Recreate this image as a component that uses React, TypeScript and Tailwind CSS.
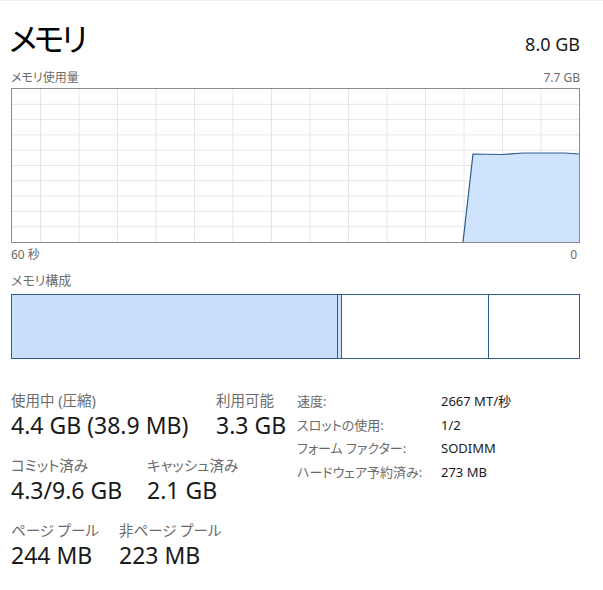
const font = { fontFamily: '"Noto Sans", "Noto Sans CJK JP", sans-serif' };

const chartW = 567;
const chartH = 153;

function UsageChart() {
  const vLines: number[] = [];
  for (let x = 28.5; x < chartW; x += 38.5) vLines.push(x);
  const hLines: number[] = [];
  for (let i = 1; i < 10; i++) hLines.push((chartH / 10) * i);
  const pts = "451,153 461,65 490,65.5 511,64 553,64 567,65 567,153";
  const line = "451,153 461,65 490,65.5 511,64 553,64 567,65";
  return (
    <div className="w-[569px] h-[155px] border border-[#8b8b8b]">
      <svg width={chartW} height={chartH} className="block">
        {vLines.map((x) => (
          <line key={"v" + x} x1={x} y1={0} x2={x} y2={chartH} stroke="#e6e6e6" strokeWidth={1} />
        ))}
        {hLines.map((y) => (
          <line key={"h" + y} x1={0} y1={y} x2={chartW} y2={y} stroke="#e6e6e6" strokeWidth={1} />
        ))}
        <polygon points={pts} fill="#c9e0fc" fillOpacity={0.9} />
        <polyline points={line} fill="none" stroke="#2b5c91" strokeWidth={1.2} />
      </svg>
    </div>
  );
}

function Composition() {
  return (
    <div className="flex w-[569px] h-[65px] border border-[#2d5e92]">
      <div className="w-[326px] bg-[#c9e0fc] border-r border-[#2d5e92]" />
      <div className="w-[4px] bg-[#c9e0fc] border-r border-[#2d5e92]" />
      <div className="w-[147px] border-r border-[#2d5e92]" />
      <div className="flex-1" />
    </div>
  );
}

function Stat({ label, value, className }: { label: string; value: string; className?: string }) {
  return (
    <div className={className}>
      <div className="text-[14.5px] leading-[20px] text-[#6b6b6b] whitespace-nowrap">{label}</div>
      <div className="text-[23px] leading-[30px] text-[#1a1a1a] whitespace-nowrap">{value}</div>
    </div>
  );
}

const details = [
  ["速度:", "2667 MT/秒"],
  ["スロットの使用:", "1/2"],
  ["フォーム ファクター:", "SODIMM"],
  ["ハードウェア予約済み:", "273 MB"],
];

export default function App() {
  return (
    <div
      className="w-[603px] h-[590px] bg-white border-t border-[#efefef] overflow-hidden [font-feature-settings:'palt']"
      style={font}
    >
      <div className="pl-[11px] w-[580px]">
        <div className="flex justify-between items-baseline mt-[20px] h-[36px]">
          <div className="text-[32px] leading-[36px] text-black -ml-[2px] tracking-[-3px]">メモリ</div>
          <div className="text-[18px] leading-[24px] text-[#1a1a1a]">8.0 GB</div>
        </div>
        <div className="flex justify-between mt-[13px] text-[12px] leading-[16px] text-[#6b6b6b]">
          <span>メモリ使用量</span>
          <span>7.7 GB</span>
        </div>
        <div className="mt-[2px]">
          <UsageChart />
        </div>
        <div className="flex justify-between mt-[4px] text-[12px] leading-[16px] text-[#6b6b6b]">
          <span>60 秒</span>
          <span className="pr-[3px]">0</span>
        </div>
        <div className="mt-[9px] text-[13px] leading-[16px] text-[#6b6b6b]">メモリ構成</div>
        <div className="mt-[6px]">
          <Composition />
        </div>
        <div className="flex mt-[31px]">
          <div className="w-[286px] flex flex-col gap-[15px]">
            <div className="flex">
              <Stat className="w-[205px]" label="使用中 (圧縮)" value="4.4 GB (38.9 MB)" />
              <Stat label="利用可能" value="3.3 GB" />
            </div>
            <div className="flex">
              <Stat className="w-[136px]" label="コミット済み" value="4.3/9.6 GB" />
              <Stat label="キャッシュ済み" value="2.1 GB" />
            </div>
            <div className="flex">
              <Stat className="w-[108px]" label="ページ プール" value="244 MB" />
              <Stat label="非ページ プール" value="223 MB" />
            </div>
          </div>
          <div className="flex flex-col text-[13px] leading-[23.5px]">
            {details.map(([k, v]) => (
              <div key={k} className="flex">
                <span className="w-[144px] text-[#6b6b6b] whitespace-nowrap">{k}</span>
                <span className="text-[#1a1a1a]">{v}</span>
              </div>
            ))}
          </div>
        </div>
      </div>
    </div>
  );
}
